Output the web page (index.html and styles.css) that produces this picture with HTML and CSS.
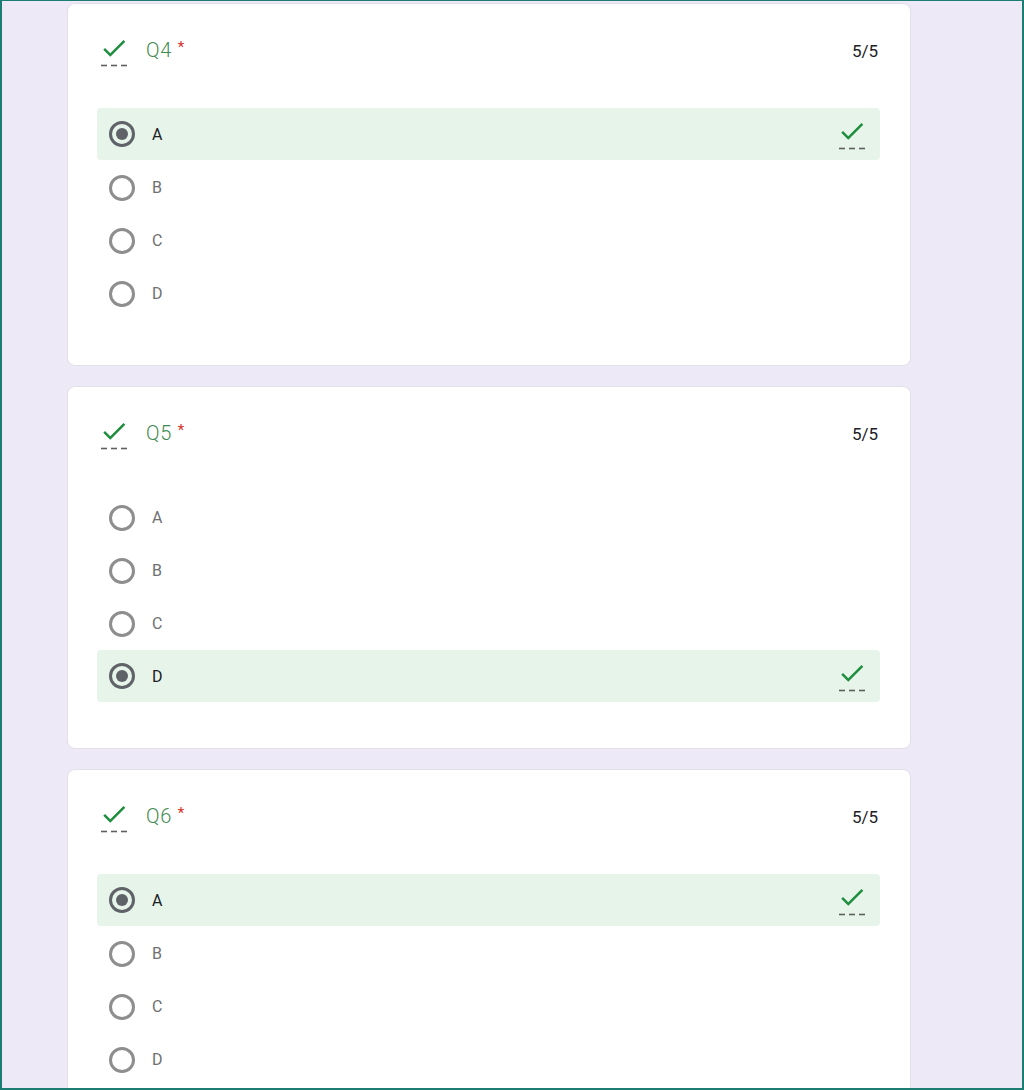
FILE: index.html
```html
<!DOCTYPE html>
<html>
<head>
<meta charset="utf-8">
<link rel="stylesheet" href="styles.css">
</head>
<body>
<div class="frame">
  <section class="card">
    <div class="head">
      <svg class="ok" width="30" height="36" viewBox="0 0 30 36"><path d="M11.25 20.2L6.04 15l-1.78 1.76 7 7 15-15-1.76-1.76z" fill="#1e8e3e"/><g stroke="#5f5f5f" stroke-width="1.6"><line x1="2" y1="32.5" x2="8" y2="32.5"/><line x1="12" y1="32.5" x2="18" y2="32.5"/><line x1="22" y1="32.5" x2="28" y2="32.5"/></g></svg>
      <div class="title">Q4<span class="req">*</span></div>
      <div class="score">5/5</div>
    </div>
    <div class="opts">
      <div class="opt sel"><span class="radio on"></span><span class="lbl">A</span><svg class="ok" width="30" height="36" viewBox="0 0 30 36"><path d="M11.25 20.2L6.04 15l-1.78 1.76 7 7 15-15-1.76-1.76z" fill="#1e8e3e"/><g stroke="#5f5f5f" stroke-width="1.6"><line x1="2" y1="32.5" x2="8" y2="32.5"/><line x1="12" y1="32.5" x2="18" y2="32.5"/><line x1="22" y1="32.5" x2="28" y2="32.5"/></g></svg></div>
      <div class="opt"><span class="radio"></span><span class="lbl">B</span></div>
      <div class="opt"><span class="radio"></span><span class="lbl">C</span></div>
      <div class="opt"><span class="radio"></span><span class="lbl">D</span></div>
    </div>
  </section>
  <section class="card">
    <div class="head">
      <svg class="ok" width="30" height="36" viewBox="0 0 30 36"><path d="M11.25 20.2L6.04 15l-1.78 1.76 7 7 15-15-1.76-1.76z" fill="#1e8e3e"/><g stroke="#5f5f5f" stroke-width="1.6"><line x1="2" y1="32.5" x2="8" y2="32.5"/><line x1="12" y1="32.5" x2="18" y2="32.5"/><line x1="22" y1="32.5" x2="28" y2="32.5"/></g></svg>
      <div class="title">Q5<span class="req">*</span></div>
      <div class="score">5/5</div>
    </div>
    <div class="opts">
      <div class="opt"><span class="radio"></span><span class="lbl">A</span></div>
      <div class="opt"><span class="radio"></span><span class="lbl">B</span></div>
      <div class="opt"><span class="radio"></span><span class="lbl">C</span></div>
      <div class="opt sel"><span class="radio on"></span><span class="lbl">D</span><svg class="ok" width="30" height="36" viewBox="0 0 30 36"><path d="M11.25 20.2L6.04 15l-1.78 1.76 7 7 15-15-1.76-1.76z" fill="#1e8e3e"/><g stroke="#5f5f5f" stroke-width="1.6"><line x1="2" y1="32.5" x2="8" y2="32.5"/><line x1="12" y1="32.5" x2="18" y2="32.5"/><line x1="22" y1="32.5" x2="28" y2="32.5"/></g></svg></div>
    </div>
  </section>
  <section class="card">
    <div class="head">
      <svg class="ok" width="30" height="36" viewBox="0 0 30 36"><path d="M11.25 20.2L6.04 15l-1.78 1.76 7 7 15-15-1.76-1.76z" fill="#1e8e3e"/><g stroke="#5f5f5f" stroke-width="1.6"><line x1="2" y1="32.5" x2="8" y2="32.5"/><line x1="12" y1="32.5" x2="18" y2="32.5"/><line x1="22" y1="32.5" x2="28" y2="32.5"/></g></svg>
      <div class="title">Q6<span class="req">*</span></div>
      <div class="score">5/5</div>
    </div>
    <div class="opts">
      <div class="opt sel"><span class="radio on"></span><span class="lbl">A</span><svg class="ok" width="30" height="36" viewBox="0 0 30 36"><path d="M11.25 20.2L6.04 15l-1.78 1.76 7 7 15-15-1.76-1.76z" fill="#1e8e3e"/><g stroke="#5f5f5f" stroke-width="1.6"><line x1="2" y1="32.5" x2="8" y2="32.5"/><line x1="12" y1="32.5" x2="18" y2="32.5"/><line x1="22" y1="32.5" x2="28" y2="32.5"/></g></svg></div>
      <div class="opt"><span class="radio"></span><span class="lbl">B</span></div>
      <div class="opt"><span class="radio"></span><span class="lbl">C</span></div>
      <div class="opt"><span class="radio"></span><span class="lbl">D</span></div>
    </div>
  </section>
</div>
</body>
</html>
```
FILE: styles.css
```css
html, body {
  margin: 0;
  padding: 0;
}
body {
  font-family: Roboto, "Liberation Sans", Arial, sans-serif;
  background: #ede9f7;
}
.frame {
  box-sizing: border-box;
  width: 1024px;
  height: 1090px;
  border: 2px solid #1c7d72;
  border-top-width: 1px;
  padding: 2px 0 0 65px;
  overflow: hidden;
  background: #ede9f7;
}
.card {
  box-sizing: border-box;
  width: 844px;
  height: 363px;
  background: #fff;
  border: 1px solid #e2dfe8;
  border-radius: 8px;
  padding: 29px 30px 45px 29px;
  margin-bottom: 20px;
  flex-shrink: 0;
}
.head {
  display: flex;
  align-items: flex-start;
  height: 36px;
  margin-left: 2px;
  margin-bottom: 39px;
}
.title {
  margin-top: 2px;
  margin-left: 17px;
  font-size: 20px;
  line-height: 24px;
  font-weight: 300;
  color: #3f8a52;
  letter-spacing: 0.6px;
}
.req {
  color: #d93025;
  font-size: 15px;
  font-weight: 400;
  margin-left: 6px;
  vertical-align: 5px;
}
.score {
  margin-left: auto;
  margin-top: 8px;
  margin-right: 2px;
  font-size: 17px;
  line-height: 20px;
  color: #202124;
}
.opts {
  display: flex;
  flex-direction: column;
}
.opt {
  display: flex;
  align-items: center;
  height: 53px;
  padding: 0 13px 0 12px;
  border-radius: 4px;
}
.opt.sel {
  background: #e6f4ea;
  height: 52px;
  margin-bottom: 1px;
}
.radio {
  box-sizing: border-box;
  width: 26px;
  height: 26px;
  border: 3px solid #8e8e8e;
  border-radius: 50%;
  display: flex;
  align-items: center;
  justify-content: center;
  flex-shrink: 0;
}
.radio.on {
  border-color: #5f6368;
}
.radio.on::after {
  content: "";
  width: 12px;
  height: 12px;
  border-radius: 50%;
  background: #5f6368;
}
.lbl {
  margin-left: 17px;
  font-size: 16px;
  color: #707070;
}
.sel .lbl {
  color: #202124;
}
.opt .ok {
  margin-left: auto;
  margin-top: 0;
}
```
